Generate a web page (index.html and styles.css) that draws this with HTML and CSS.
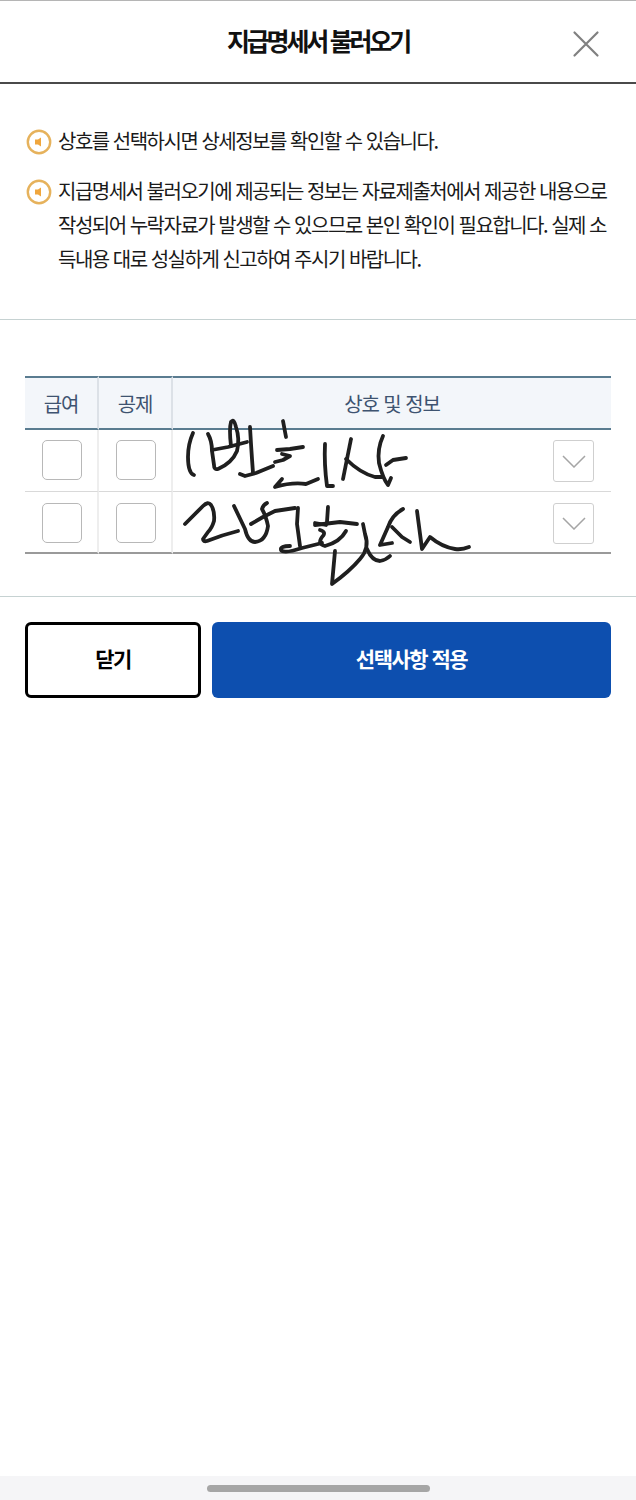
FILE: index.html
```html
<!DOCTYPE html>
<html lang="ko">
<head>
<meta charset="utf-8">
<title>지급명세서 불러오기</title>
<link rel="stylesheet" href="styles.css">
</head>
<body>
<div class="page">
  <header class="head">
    <h1 class="title">지급명세서 불러오기</h1>
    <button class="close" aria-label="닫기">
      <svg width="28" height="28" viewBox="0 0 28 28"><path d="M2.5 2.5 L25.5 25.5 M25.5 2.5 L2.5 25.5"/></svg>
    </button>
  </header>

  <section class="notes">
    <div class="note">
      <svg class="note-icon" width="26" height="26" viewBox="0 0 26 26"><circle cx="13" cy="13" r="11.2"/><path d="M9 10.5h3l3-2v9l-3-2H9z"/></svg>
      <p>상호를 선택하시면 상세정보를 확인할 수 있습니다.</p>
    </div>
    <div class="note">
      <svg class="note-icon" width="26" height="26" viewBox="0 0 26 26"><circle cx="13" cy="13" r="11.2"/><path d="M9 10.5h3l3-2v9l-3-2H9z"/></svg>
      <p>지급명세서 불러오기에 제공되는 정보는 자료제출처에서 제공한 내용으로 작성되어 누락자료가 발생할 수 있으므로 본인 확인이 필요합니다. 실제 소득내용 대로 성실하게 신고하여 주시기 바랍니다.</p>
    </div>
  </section>

  <section class="list">
    <div class="table-wrap">
      <table class="table">
        <thead>
          <tr><th class="col-check">급여</th><th class="col-check">공제</th><th>상호 및 정보</th></tr>
        </thead>
        <tbody>
          <tr>
            <td class="cell-check"><span class="check"></span></td>
            <td class="cell-check"><span class="check"></span></td>
            <td class="cell-info"><span class="toggle"><svg width="24" height="13" viewBox="0 0 24 13"><path d="M1 1 L12 12 L23 1"/></svg></span></td>
          </tr>
          <tr>
            <td class="cell-check"><span class="check"></span></td>
            <td class="cell-check"><span class="check"></span></td>
            <td class="cell-info"><span class="toggle"><svg width="24" height="13" viewBox="0 0 24 13"><path d="M1 1 L12 12 L23 1"/></svg></span></td>
          </tr>
        </tbody>
      </table>
      <svg class="scribble" width="636" height="600" viewBox="25 377 636 600" aria-hidden="true">
        <path d="M193 434 Q188 445 188 458 Q188 474 194 476"/>
        <path d="M208 435 Q212 442 212 452 L214 466 Q214 471 218 470 Q232 464 237 452 Q240 440 236 428 Q234 419 231 423 Q229 430 231 447"/>
        <path d="M212 451 L228 448 L247 443"/>
        <path d="M250 428 L251 445 L252 460 L253 474"/>
        <path d="M240 475 L245 477 L256 474 L273 467"/>
        <path d="M283 422 L286 438"/>
        <path d="M277 451 L290 450 L303 448"/>
        <path d="M282 455 L290 457 L283 461 L275 463"/>
        <path d="M282 480 L275 488 Q292 483 306 485 L318 480"/>
        <path d="M325 445 Q324 465 327 487 L333 487"/>
        <path d="M351 440 L348 455 L343 480"/>
        <path d="M346 460 Q360 474 375 478 L382 478"/>
        <path d="M383 437 Q377 450 379 464 Q383 480 388 486 L391 479"/>
        <path d="M386 466 L393 461 L406 459"/>
        <path d="M185 525 L203 507 Q208 502 211 506 Q215 512 214 522 Q212 529 208 533 L203 540 Q203 543 207 542 Q222 536 238 532"/>
        <path d="M234 507 L245 530 Q248 543 255 543 Q266 542 268 527 Q266 517 262 510 Q263 506 267 504"/>
        <path d="M251 525 L263 518 L275 512 L295 509"/>
        <path d="M298 509 L297 525 L300 547"/>
        <path d="M290 547 Q280 547 281 551 Q284 555 302 549 L322 544"/>
        <path d="M315 524 L326 526"/>
        <path d="M328 508 L327 523"/>
        <path d="M315 526 L340 523 L357 525"/>
        <path d="M320 531 Q327 533 322 538 Q317 545 325 547 Q340 543 346 532"/>
        <path d="M335 552 L332 585 Q350 572 360 560 Q370 549 365 535 L363 525"/>
        <path d="M367 550 Q372 562 380 562 Q386 561 390 557"/>
        <path d="M403 510 Q392 516 388 528 L380 546 L392 544"/>
        <path d="M392 528 L402 538 L410 543"/>
        <path d="M417 512 L422 550 L430 538 Q442 548 455 550 Q462 551 469 548"/>
      </svg>
    </div>
  </section>

  <footer class="actions">
    <button class="btn btn-close">닫기</button>
    <button class="btn btn-apply">선택사항 적용</button>
  </footer>

  <div class="spacer"></div>

  <div class="home-bar"><span class="home-indicator"></span></div>
</div>
</body>
</html>
```

FILE: styles.css
```css
* { box-sizing: border-box; }

html, body {
  margin: 0;
  padding: 0;
  background: #fff;
}

body {
  font-family: "Noto Sans CJK KR", "Noto Sans", sans-serif;
  color: #1a1a1a;
}

.page {
  width: 636px;
  height: 1500px;
  display: flex;
  flex-direction: column;
  overflow: hidden;
}

.head {
  height: 84px;
  flex: none;
  display: flex;
  align-items: center;
  justify-content: center;
  position: relative;
  padding-bottom: 4px;
  border-top: 1px solid #b5b5b5;
  border-bottom: 2px solid #4a4a4a;
}

.title {
  margin: 0;
  font-size: 25px;
  font-weight: 700;
  letter-spacing: -3.2px;
  color: #111;
}

.close {
  position: absolute;
  right: 36px;
  top: 29px;
  width: 28px;
  height: 28px;
  padding: 0;
  border: 0;
  background: none;
}

.close svg { display: block; }

.close path {
  stroke: #808080;
  stroke-width: 2.2;
  fill: none;
  stroke-linecap: round;
}

.notes {
  flex: none;
  height: 236px;
  padding: 40px 26px 0 26px;
  display: flex;
  flex-direction: column;
  gap: 16px;
  border-bottom: 1px solid #c6d2d2;
}

.note {
  display: flex;
  gap: 6px;
  align-items: flex-start;
}

.note-icon {
  flex: none;
  margin-top: 5px;
}

.note-icon circle {
  fill: #fff;
  stroke: #e6b25c;
  stroke-width: 2.4;
}

.note-icon path { fill: #f0a63c; }

.note p {
  margin: 0;
  font-size: 20px;
  line-height: 34px;
  letter-spacing: -1.5px;
  color: #1a1a1a;
}

.list {
  flex: none;
  height: 277px;
  padding: 56px 25px 0 25px;
  border-bottom: 1px solid #c6d2d2;
}

.table-wrap { position: relative; }

.table {
  width: 586px;
  border-collapse: separate;
  border-spacing: 0;
  table-layout: fixed;
}

.table th {
  height: 54px;
  padding: 0;
  background: #f3f6fa;
  border-top: 2px solid #5a7c90;
  border-bottom: 2px solid #5a7c90;
  border-right: 2px solid #dce1e7;
  font-size: 20px;
  font-weight: 400;
  letter-spacing: -1.1px;
  color: #3e5370;
}

.table th:last-child { border-right: 0; }

.col-check { width: 74px; }

.table td {
  height: 62px;
  padding: 0;
  border-bottom: 1px solid #d9d9d9;
  vertical-align: top;
}

.table tr:last-child td {
  height: 62px;
  border-bottom: 2px solid #9a9a9a;
}

.cell-check {
  border-right: 2px solid #eeeeee;
  text-align: center;
}

.check {
  display: block;
  width: 40px;
  height: 40px;
  margin: 10px 0 0 17px;
  background: #fff;
  border: 1px solid #b8b8b8;
  border-radius: 5px;
}

.table tr:last-child .check { margin-top: 11px; }

.cell-info { text-align: right; }

.toggle {
  display: inline-flex;
  align-items: center;
  justify-content: center;
  width: 41px;
  height: 42px;
  margin: 10px 17px 0 0;
  border: 1px solid #cfcfcf;
  border-radius: 3px;
}

.table tr:last-child .toggle {
  margin-top: 11px;
  height: 41px;
}

.toggle svg { display: block; }

.toggle path {
  fill: none;
  stroke: #a5a5a5;
  stroke-width: 1.5;
}

.scribble {
  position: absolute;
  left: 0;
  top: 0;
  overflow: visible;
  pointer-events: none;
}

.scribble path {
  fill: none;
  stroke: #1f1f1f;
  stroke-width: 3.8;
  stroke-linecap: round;
  stroke-linejoin: round;
}

.actions {
  flex: none;
  display: flex;
  gap: 11px;
  padding: 25px 25px 0 25px;
  height: 101px;
}

.btn {
  height: 76px;
  border-radius: 6px;
  font-family: inherit;
  font-size: 21px;
  font-weight: 700;
  letter-spacing: -1.5px;
  padding: 0 0 4px;
}

.btn-close {
  width: 176px;
  flex: none;
  background: #fff;
  border: 3px solid #000;
  color: #000;
}

.btn-apply {
  flex: 1;
  background: #0d4faf;
  border: 0;
  color: #fff;
}

.spacer { flex: 1; }

.home-bar {
  flex: none;
  height: 24px;
  background: #f5f5f7;
  display: flex;
  justify-content: center;
  padding-top: 9px;
}

.home-indicator {
  width: 223px;
  height: 7px;
  border-radius: 4px;
  background: #a6a6a6;
}
```
